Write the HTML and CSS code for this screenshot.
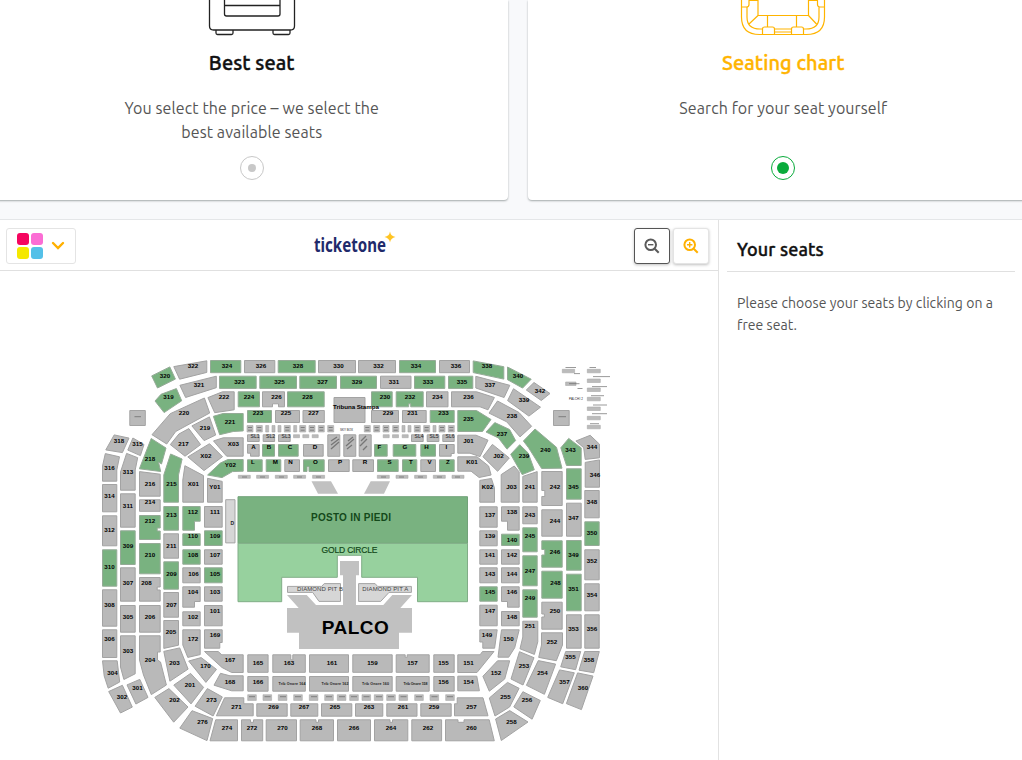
FILE: index.html
```
<!doctype html>
<html lang="en">
<head>
	<meta charset="utf-8">
	<title>Seating chart</title>
	<link rel="stylesheet" href="styles.css">
</head>

<body>
<div class="modes">
	<div class="mode">
		<svg class="mode-icon" width="90" height="36" viewBox="0 0 90 36">
			<path d="M2.500 0v26q0 4 4 4h77q4 0 4-4V0M17.500 0v14q0 2 2 2h51.500q2 0 2-2V0M17.500 5.500h55.500M9 30v3q0 1.500 1.500 1.500h14q1.500 0 1.500-1.500v-3M66 30v3q0 1.500 1.500 1.500h14q1.500 0 1.500-1.500v-3"/>
		</svg>
		<h2>Best seat</h2>
		<p>You select the price – we select the<br>best available seats</p>
		<span class="radio"></span>
	</div>
	<div class="mode active">
		<svg class="mode-icon" width="90" height="36" viewBox="0 0 90 36">
			<path d="M3.500 0v17q0 17.500 18 17.500h47q18 0 18-17.500V0M3.500 7h5q2.500 0 2.500-2.500V0.500h9v15h50.500v-15h9v4q0 2.500 2.500 2.500h5M9 7v10q0 12 13 12h3M81 7v10q0 12-13 12h-3M37 29h17M37 32h17M20 15.500l-9 8.500M70.500 15.500l8 8.500M29.500 15.500V27M58.500 15.500V27"/>
			<path d="M24.500 34.500V29q0-2 2-2h8q2 0 2 2v5.500M53.500 34.500V29q0-2 2-2h8q2 0 2 2v5.500"/>
		</svg>
		<h2>Seating chart</h2>
		<p>Search for your seat yourself</p>
		<span class="radio"></span>
	</div>
</div>

<div class="chooser">
	<div class="plan">
		<div class="toolbar">
			<button class="legend">
				<span class="swatches"><i class="red"></i><i class="pink"></i><i class="yellow"></i><i class="blue"></i></span>
				<svg width="14" height="9" viewBox="0 0 14 9"><path d="M2 2l5 5 5-5"/></svg>
			</button>
			<svg class="logo" width="90" height="32" viewBox="0 0 90 32">
				<text x="4" y="23" textLength="72" lengthAdjust="spacingAndGlyphs">ticketone</text>
				<path d="M80 2.500q.6 4.500 5.500 5.500q-4.900 1-5.500 5.500q-.6-4.500-5.500-5.500q4.900-1 5.500-5.500z"/>
			</svg>
			<div class="zoom">
				<button class="out"><svg width="16" height="16" viewBox="0 0 16 16"><circle cx="6.700" cy="6.700" r="5.300"/><path d="M10.700 10.700l4 4"/><path class="sign" d="M4 6.700h5.400"/></svg></button>
				<button class="in"><svg width="16" height="16" viewBox="0 0 16 16"><circle cx="6.700" cy="6.700" r="5.300"/><path d="M10.700 10.700l4 4"/><path class="sign" d="M4 6.700h5.400M6.700 4v5.400"/></svg></button>
			</div>
		</div>

		<svg class="map" width="718" height="489" viewBox="0 271 718 489">
			<!-- pitch and stage -->
			<path class="posto" d="M238 496.700h229.500v46.600H238z"/>
			<path class="gold" d="M238 543.300h229.500v58.400h-50v-24.400h-55.800v-22h-24.400v22h-55.600v24.400H238z"/>
			<path class="stage" d="M340 561h19v14.300h-3V605h27.300l9-10H412l-11.700 13H412v24.700h-13V649H299v-16.300h-12V608h11.700L287 595h19.700l9.300 10h27v-29.700h-3zM311.500 481.300H331l7 12.400h-20zM370.700 481.300H390l-6 12.400h-20z"/>
			<path class="pit" d="M287.500 586.400h34.200l2.500-2.800h16.300v17.800h-21.500l-6.300-9h-25.200zM358.600 583.600h16.500l2.500 2.800h33.800v6H389l-8.300 9h-22.100zM225.700 499.700h9.300v43.200h-9.300z"/>

			<g class="sold">
				<!-- third ring, north -->
				<path d="M173.800 366.600l33-5.800v11.600l-27.200 6.800zM244.500 360.500h30.300v12.200h-30.300zM318.500 360.500h37v12.200h-37zM358.500 360.500h37v12.200h-37zM439.500 360.500h30v12.200h-30zM534 382.500l16 11-8.700 7-15-10.500z"/>
				<path d="M179.900 385.300l36.400-9.100v11.500l-30.700 9.800zM380.500 376.200h30.500v12.200h-30.500zM475.800 376.300l34 9-5.700 12.200-28.300-9.500zM513.500 388.700l27 18.500-11.600 8.900-21.300-15.500z"/>
				<!-- second ring, north -->
				<path d="M207.900 397.600l14.500-5.800h11.800v18l-19.500 2.900zM262.500 391.800h22v15h-6v-3h-6v3h-10zM334 397.500h31v25h-31zM426.500 391.800h21.500v15h-21.500zM451.500 391.800h25.200l17.700 5.700-6.400 12.300-8-3h-28.500z"/>
				<path d="M204.400 398l5.300 15-34 18.500-9 12.500-14.700-9.300 18.200-21zM191.900 425.900l17.500-9 6.300 18.100-11.600 5.600zM170.300 444.600l8.600-10.600 9.900-5.400 11.800 16-15.600 11.600zM497.500 401l21.500 11.500 12.600 13.800-11.600 10.600-13.300-15.100-17.700-8.700z"/>
				<path d="M275.500 410.500h24v12h-24zM303 410.500h21.300v12H303zM371.500 410.500h27v12h-27zM402.500 410.500h23.700v12h-23.700z"/>
				<!-- corners -->
				<path d="M187.800 456.900l21.700-13.200 13 13-18.500 13.900zM213.500 440.900l9.700-3.100h20v18.400h-16.500l-2-2.200zM184.900 465.700l18.600 9.900v26.600h-20.700V480zM207.500 478.300l14.700 3.100v20.800h-14.700zM457.800 435.200H476l12 5-8 16.400-10-3.400h-12.200zM492.400 444.400l16.900 13.600-11.700 13.300-14.700-14.600zM457.800 456.800H477l11.600 9.200 2.500 9-12 2.500-8-6.300h-13.300zM479.800 480.400l11.600-1.900 3.100 9.500v14.200h-14.700zM501.200 474.600l13-8.600 5 5.900v30.300h-18zM522.800 476.400l14.400-4.800v30.600h-14.400z"/>
				<path d="M114.200 434.900l14.800 3.200-6.600 14.500-16.600-2.700zM132.900 438l11.100 6.500-3.600 11.100-12.600-5.500zM105.300 453.600l14.200 3.200-2.700 13.200v11.200h-14.300V466zM126.600 453.400l11.100 4.300-2.500 12.300v20.200h-14.700V472zM575.900 441l14.300-5.700 9.300 8.900v13.600l-14.300 1.600-1.500-11.700zM585.200 462.400l14.300-2.500v27.300h-14.300z"/>
				<!-- west stand -->
				<path d="M102.500 484.500h14.300v27.300h-14.300zM102.500 515.800h14.300v30h-14.300zM102.500 589.800h14.300v36.400h-14.300zM102.500 629.800h14.300v27.700h-14.300zM102.500 660.800h14.700l2.500 21.200-11.500 6.200-4-12.200zM108.700 691.500l13.700-6.200 9.900 21.800-11.800 5.900z"/>
				<path d="M120.500 493.800h14.700v33.400h-14.700zM120.500 567.800h14.700v33.400h-14.700zM120.500 605.500h14.700v26.700h-14.700zM120.500 635.800h14.700v38l-11.300 5.700-3.400-12.500zM127 684.900l12.800-5.500 8.200 18-12.100 6.600z"/>
				<path d="M139.500 471.600l20.700 2.600v22h-20.700zM139.500 499.800h20.700v11.500h-20.700zM139.500 577.500h20.700v9.500h-3v3h3v11.200h-20.700zM139.500 605.500h20.700v26.700h-20.700zM139.500 635.800h20.700V652h-2.700v8l3 2 5.900 23-15.100 9.600-7.800-19.600-4-15z"/>
				<path d="M163.800 533.800h14.700v24.400h-14.700zM163.800 592.500h14.700v24.700h-14.700zM163.800 620.500h14.700v24.700l-14.700 3.200zM163.800 651.400l15.900-3.500 8.400 21.200-18.200 12.100zM154.800 697.400l14.100-8.800 19.100 18.400-14.300 15.200zM173.800 685.100l16.800-11.700 13 14-12.600 16.500z"/>
				<path d="M182.800 567.800h17.400v15h-17.400zM182.800 586.800h17.400v14.700h-5.700v5.700h-11.700zM182.800 611.800h17.400v14h-17.400zM182.800 629.800h17.400v24.800l-12.400 2.800-5-12.400zM188.700 661l12.500-3.400 15.300 11.800-10.600 13zM207.400 688.600l14.900 8.300-9.200 19.100-18-9.800zM192 710.700l20.700 7.900-5.700 22-27.200-12.500z"/>
				<path d="M204.500 506.500h17.700v20.700h-17.700zM204.500 549.800h17.700v14.400h-17.700zM204.500 586.800h17.700v14.400h-17.700zM204.500 605.500h17.700v20.300h-17.700zM204.500 629.800h17.700v12.700h-2.400v5.700h-15.300zM204.500 651.500h13.700l3.600 3.300h21.400v17.700h-11.500l-9.700-5zM220.500 673.300l9.500 2.500h13.200v15h-11.500l-17.700-5.600zM224.600 697.800h19.200v6h9.400v12h-36.800zM215.700 719.800h21.800v21H210z"/>
				<!-- main stand -->
				<path d="M247.800 654.800h20.300v17.500h-20.300zM272.800 654.800h18v5h2v-5h12.500v17.500h-32.500zM309.500 654.800h39v17.500h-39zM352.800 654.800h39.400v17.500h-39.400zM396.200 654.800h9v2.500h2v-2.500h22v17.500h-33zM433.800 654.800h20.400v17.500h-20.400zM457.800 654.800h22.300l2.400-3.300h11.500l-17 21h-19.200z"/>
				<path d="M247.800 676.500h20.300v14.700h-20.300zM272.800 676.500h32.500v14.700h-32.500zM309.500 676.500h39v14.700h-39zM352.800 676.500h39.400v14.700h-39.400zM396.200 676.500h33v14.700h-33zM433.800 676.500h20.400v14.700h-20.400zM457.800 676.200h19l2.600 14.600h-21.600z"/>
				<path d="M256.800 703.800h30.400v12.400h-30.400zM290.800 703.800h27v12.400h-27zM321.500 703.800h30.300v12.400h-30.300zM355.500 703.800h27.300v12.400h-27.300zM386.800 703.800H417v12.400h-30.200zM420.800 703.800h30.400v12.400h-30.400zM454.500 703.800h2.700v-6H483l5 18h-33.500z"/>
				<path d="M241.500 719.800h9v2.500h3v-2.500h9.200v21h-21.200zM266.200 719.800h30.300v21h-30.300zM300.200 719.800h15.800v2.500h2.500v-2.500h15v21h-33.300zM337.500 719.800h33v21h-33zM374.500 719.800h15.500v2.500h2.500v-2.500h15.300v21h-33.300zM411.800 719.800h29.800v21h-29.800zM445.500 719.800h12.500v2.500h6v-2.500h25.200l5.100 21h-48.800z"/>
				<!-- east stand -->
				<path d="M479.800 506.800h17.400v20.400h-17.400zM479.800 530.800h17.400v15h-17.400zM479.800 549.800h17.400v14.400h-17.400zM479.800 567.800h17.400v15h-17.400zM479.800 605.200h17.400v20.600h-17.400zM479.800 629.800h17.400l-2.600 18.400h-11.800V642h-3z"/>
				<path d="M501.500 506.800h17.700v23.400h-11.700v-9h-6zM501.500 549.800h17.700v14.400h-17.700zM501.500 567.800h17.700v15h-17.700zM501.500 586.800h17.700v20.400h-11.700v-5.700h-6zM501.500 611.500h17.700v14.300h-17.700zM501.500 629.800h17.700l-4.500 18-6 9.400H498zM497.500 660.800h12.200l-5 18.200-15.400 12.200-6.400-14.900z"/>
				<path d="M522.800 506.800h14.400v17h-14.400zM522.800 621.200h15v20.500l-3.400 12.700-14.400-5.600 2.800-11.800zM519.500 651.700l14.500 6-11 27.300-12-6zM507.500 682.400l11.600 5.900-9.500 18.700-14.600 9-5.700-18zM522.900 691.700l17.400 8.800-8.200 18.700-18.300-12.300zM509.700 710.600l18.300 11.400-26.700 18.500-5.700-21.500z"/>
				<path d="M541.800 471.500h20.400v34h-20.400v-9h3v-6h-3zM541.800 509.800h20.400v26.400h-20.400zM541.800 602.200h20.400v27h-20.400V617h2.500v-3h-2.500zM541.500 632.800h21V645l-6.200 15.700-17.600-3.300 2.800-12.400zM538.300 660.600l17.300 3.500-11.200 30.200-18-9z"/>
				<path d="M566.500 503.200h14.700v33h-14.700zM566.500 614.800h14.700v33.400h-14.700zM565.700 651.500h15l-5.100 18.200-14.900-2.900zM559.600 669.900l14.700 2.900-11.600 30.900-15-6.300zM584.800 490.500h14.400v27.300h-14.400zM584.800 549.800h14.400v30h-14.400zM584.800 583.800h14.400v27h-14.400zM584.800 614.800h14.400v33.400h-14.400zM584.700 651.500h14.600l-5.600 21.200-14.700-2.500zM577.600 672.900l15.400 3.200-11.600 33.500-15-6z"/>
				<!-- lettered boxes -->
				<path d="M247.500 444.500h11.700v11.700h-8.700v-3h-3zM303.500 444.500h19.700v11.700h-19.700zM327.800 434.800h12v21.500h-12zM343.800 434.800h12v21.500h-12zM359.200 434.800h12v21.500h-12zM439.500 444.500h14.700v9h-3v2.700h-11.700zM284.800 459.800h14.700v11.700h-14.700zM328.500 459.800h20.700v11.700h-20.700zM352.800 459.800h20.700v11.700h-20.700zM420.800 459.800h14.700v11.700h-14.700z"/>
				<path d="M247.500 434.800h11.700v6.700h-11.700zM263.200 434.800h11.400v6.700h-11.400zM278.500 434.800h11.700v6.700h-11.700zM411.500 434.800h11.700v6.700h-11.700zM427.200 434.800h11.700v6.700h-11.700zM442.800 434.800h11.400v6.700h-11.400zM129.800 410.500h15.500v15h-15.500zM553.500 410.500h15.700v15h-15.700z"/>
			</g>

			<!-- sky boxes and hospitality rows -->
			<g class="mini">
				<path d="M247 425.500h6v6.500h-6zM256.300 425.500h6v6.500h-6zM265.700 425.500h3v6.500h-3zM272 425.500h3v6.500h-3zM278 425.500h3v6.500h-3zM284.300 425.500h6v6.500h-6zM293.700 425.500h3v6.500h-3zM299.700 425.500h6v6.500h-6zM309 425.500h6v6.500h-6zM318.300 425.500h6v6.500h-6zM327.700 425.500h6v6.500h-6zM364.300 425.500h6v6.500h-6zM373.700 425.500h6v6.500h-6zM383 425.500h6v6.500h-6zM392.700 425.500h6v6.500h-6zM402 425.500h3v6.500h-3zM408 425.500h3v6.500h-3zM414.300 425.500h6v6.500h-6zM423.700 425.500h6v6.500h-6zM433 425.500h3v6.500h-3zM439 425.500h6v6.500h-6zM448.300 425.500h6v6.500h-6z"/>
				<path d="M293.500 434.700h6v3h-6zM302.800 434.700h6v3h-6zM312.200 434.700h6v3h-6zM383.200 434.700h6v3h-6zM392.500 434.700h6v3h-6zM402.200 434.700h6v3h-6z"/>
				<path d="M238.300 475.300h12v3h-12zM256.600 475.300h12v3h-12zM275.300 475.300h12v3h-12zM293.600 475.300h12v3h-12zM312.600 475.300h12v3h-12zM377.300 475.300h12v3h-12zM396 475.300h12v3h-12zM414.600 475.300h12v3h-12zM433.300 475.300h12v3h-12zM452 475.300h12v3h-12z"/>
				<path d="M247.700 694.700h8.600v5.700h-8.600zM263 694.700h8.600v5.700H263zM278.300 694.700h8.600v5.700h-8.600zM293.700 694.700h8.600v5.700h-8.600zM309.300 694.700h8.600v5.700h-8.600zM324.700 694.700h8.600v5.700h-8.600zM337.300 694.700h8.600v5.700h-8.600zM349.700 694.700h8.600v5.700h-8.600zM362 694.700h8.600v5.700H362zM374.300 694.700h8.600v5.700h-8.600zM386.700 694.700h8.600v5.700h-8.600zM399 694.700h8.600v5.700H399zM414.700 694.700h8.600v5.700h-8.600zM430 694.700h8.600v5.700H430zM445.700 694.700h8.600v5.700h-8.600z"/>
				<path d="M587.300 369.300h13v3.500h-13zM587.300 379h13v3.500h-13zM587.300 388h13v3.500h-13zM587.300 397.300h13v3.500h-13zM587.300 407h13v3.500h-13zM587.300 416.300h13v3.500h-13zM587.300 425.300h13v3.500h-13zM562.300 369.300h12.300v3.500h-12.300zM565.600 382h10.400v3.500h-10.400z"/>
			</g>
			<g class="ticks">
				<path d="M248 427.500h4M257.300 427.500h4M285.300 427.500h4M300.700 427.500h4M310 427.500h4M319.300 427.500h4M328.700 427.500h4M365.300 427.500h4M374.700 427.500h4M384 427.500h4M393.700 427.500h4M415.300 427.500h4M424.700 427.500h4M440 427.500h4M449.300 427.500h4"/>
				<path d="M248 430.200h4M257.300 430.200h4M285.300 430.200h4M300.700 430.200h4M310 430.200h4M319.300 430.200h4M328.700 430.200h4M365.300 430.200h4M374.700 430.200h4M384 430.200h4M393.700 430.200h4M415.300 430.200h4M424.700 430.200h4M440 430.200h4M449.300 430.200h4"/>
				<path d="M242 477h5M260 477h5M279 477h5M297 477h5M316 477h5M381 477h5M399 477h5M418 477h5M437 477h5M455 477h5M249 696.700h6M264.500 696.700h6M280 696.700h6M295 696.700h6M311 696.700h6M326 696.700h6M339 696.700h6M351 696.700h6M363.500 696.700h6M376 696.700h6M388 696.700h6M400.500 696.700h6M416 696.700h6M431.500 696.700h6M447 696.700h6"/>
				<path d="M134.500 416.700h6.500M558.500 416.700h7.500M565.500 367.500h10.500M574 373.600h6M569 383.700h10.500M577.500 388.500h5M589.500 367.500h6.500M593 376.600h17M592 386.600h15M591 395.700h13M593 405h14M592 413.700h15M590 423.700h9"/>
			</g>

			<g class="free">
				<path d="M151.700 375.900l18.100-9 5.600 12.200-17.900 8.900zM210.500 360.500h30.300v12.200h-30.300zM278.200 360.500h37v12.200h-37zM399.500 360.500h36v12.200h-36zM473.200 360.900l30.600 5.800v12.400l-30.600-6.500zM507.500 367l23.700 12.200-8.600 8.900-15.100-8.400z"/>
				<path d="M155 401l6-6.700 15.400-5.700 5.300 12.200-17.600 11.800zM219.500 376.200h36.700v12.200h-36.700zM259.800 376.200h36.700v12.200h-36.700zM299.800 376.200h36.700v12.200h-36.700zM340.500 376.200h36v12.200h-36zM414.500 376.200h30.300v12.200h-30.300zM448.500 376.200h24.300v12.200h-24.300z"/>
				<path d="M238.200 391.800h21.300v15h-21.300zM287.500 391.800h36.700v15h-36.700zM371.500 391.800h20.700v15h-20.700zM396.200 391.800h27v15h-12.500v-3h-2v3h-12.500zM213.400 416.300l9.700-2.800h20.100v17.400l-10 .6-13.500 3.200zM247.500 410.500h24v12h-24zM430.200 410.500h24v12h-24zM457.800 410.500h18.700l14.500 9-8.500 12h-24.700z"/>
				<path d="M486 432l8.800-9.400 14.800 6.900 6 11.100-8.600 8.600-8.500-11.200zM519.700 444.700l8.500 8.300 6.100 16.700-12.100 4.900-11.500-20.300zM535 429l21.500 18.300 5.500 20.900-20.400.3-13-20.700-5.200-6.800zM568.700 438.400l12.500 9.500v17.600h-14.700l-5.700-17.700zM566.500 468.800h14.700v30.400h-14.700z"/>
				<path d="M151.200 438.500l14.800 9.500-4.500 16-3-2 2.200 9.500-21.300-2.700zM170.600 454l11.500 5-3.600 16v27.200h-14.700V475zM207.600 475l12.700-11.900 7.500-3.600h15.400v11.700l-10.700.4-10.500 6z"/>
				<path d="M262.500 444.500h12v11.700h-12zM278.500 444.500h19.700v11.700h-19.700zM374.500 444.500h12.700v11.700h-12.700zM393.200 444.500h22.600v11.700h-22.600zM420.800 444.500h14.700v11.700h-14.700zM247.500 459.800h14.700v11.700h-14.700zM266.200 459.800h14.600v11.700h-14.600zM303.500 459.800h20.700v11.700H309v-5h-2v5h-3.500zM377.500 459.800h20.700v11.700h-20.700zM402.500 459.800h14.300v11.700h-14.300zM439.500 459.800h14.700v11.700h-14.700z"/>
				<path d="M102.500 549.800h14.300v36.400h-14.300zM120.500 530.800h14.700v33.700h-14.700zM139.500 515.500h20.700V528h-3v3h3v8.500h-20.700zM139.500 543.500h20.700v30.300h-20.700zM163.800 506.500h14.700v23.700h-14.700zM163.800 561.800h14.700v27.400h-14.700zM182.800 506.500h17.400v14.700h-5.700v9h-11.700zM182.800 533.800h17.400v11.700h-17.400zM182.800 549.800h17.400v14.400h-17.400zM204.500 530.800h17.700v14.700h-17.700zM204.500 567.800h17.700v15h-17.700z"/>
				<path d="M479.800 586.800h17.400v14.400h-17.400zM501.500 534.200h17.700v11.300h-17.700zM522.800 527.800h14.400v24h-14.400zM522.800 555.800h14.400v30h-14.400zM522.800 589.800h14.400v27.400h-14.400zM541.800 540.800h20.400v26.400h-20.400V555h3v-5.500h-3zM541.800 571.200h20.400v27h-20.400zM566.500 540.500h14.700v29.700h-14.700zM566.500 574.200h14.700v36.600h-14.700zM584.800 521.800h14.400v23.700h-14.400z"/>
			</g>

			<g class="hatch">
				<path d="M331 441l6-4M331 445l8-6M331 449l8-7M348 441l5-4M346 446l8-7M347 449l5-4M361 441l5-5M360 446l7-7M363 450l4-4"/>
			</g>

			<g class="labels">
				<text x="193" y="368">322</text><text x="227" y="368">324</text><text x="261" y="368">326</text><text x="298" y="368">328</text><text x="338.500" y="368">330</text><text x="378.500" y="368">332</text><text x="416" y="368">334</text><text x="456" y="368">336</text><text x="487" y="368">338</text><text x="165" y="378">320</text><text x="518" y="378">340</text><text x="540" y="393">342</text>
				<text x="168.500" y="399">319</text><text x="199" y="387">321</text><text x="239.500" y="384">323</text><text x="279.500" y="384">325</text><text x="322.500" y="384">327</text><text x="357" y="384">329</text><text x="394" y="384">331</text><text x="428" y="384">333</text><text x="462" y="384">335</text><text x="490" y="387">337</text><text x="524" y="402">339</text>
				<text x="224" y="399">222</text><text x="249" y="399">224</text><text x="276.500" y="399">226</text><text x="307.500" y="399">228</text><text x="385" y="399">230</text><text x="410" y="399">232</text><text x="437.500" y="399">234</text><text x="468.500" y="399">236</text><text x="512" y="418">238</text><text x="356" y="409.300" textLength="46">Tribuna Stampa</text>
				<text x="184" y="415">220</text><text x="230" y="424">221</text><text x="205" y="430">219</text><text x="183.500" y="446">217</text><text x="258" y="415">223</text><text x="286" y="415">225</text><text x="313.500" y="415">227</text><text x="388" y="415">229</text><text x="412.500" y="415">231</text><text x="443.500" y="415">233</text><text x="468.500" y="421">235</text><text x="502" y="436">237</text><text x="524" y="458">239</text><text x="545.500" y="452">240</text><text x="570.500" y="452">343</text><text x="592" y="449">344</text><text x="595" y="477">346</text>
				<text x="233.500" y="446">X03</text><text x="206" y="458">X02</text><text x="193.500" y="486">X01</text><text x="230.500" y="467">Y02</text><text x="215" y="489">Y01</text><text x="468.500" y="443">J01</text><text x="498.500" y="458">J02</text><text x="511.500" y="489">J03</text><text x="472" y="464">K01</text><text x="487.500" y="489">K02</text>
				<text x="253.500" y="449">A</text><text x="269" y="449">B</text><text x="290" y="449">C</text><text x="315" y="449">D</text><text x="379.500" y="449">F</text><text x="405" y="449">G</text><text x="426.500" y="449">H</text><text x="446.500" y="449">I</text>
				<text x="253" y="464">L</text><text x="275.500" y="464">M</text><text x="290.500" y="464">N</text><text x="315.500" y="464">O</text><text x="340" y="464">P</text><text x="365" y="464">R</text><text x="389.500" y="464">S</text><text x="411" y="464">T</text><text x="429.500" y="464">V</text><text x="448" y="464">Z</text>
				<text x="119" y="443">318</text><text x="137.500" y="446">315</text><text x="150" y="461">218</text><text x="109.500" y="470">316</text><text x="128" y="474">313</text><text x="150" y="486">216</text><text x="171.500" y="486">215</text>
				<text x="109.500" y="498">314</text><text x="109.500" y="532">312</text><text x="109.500" y="569">310</text><text x="109.500" y="607">308</text><text x="109.500" y="641">306</text><text x="112.500" y="675">304</text><text x="122" y="699">302</text>
				<text x="128" y="508">311</text><text x="128" y="548">309</text><text x="128" y="585">307</text><text x="128" y="619">305</text><text x="128" y="653">303</text><text x="137.500" y="690">301</text>
				<text x="150" y="504">214</text><text x="150" y="523">212</text><text x="150" y="557">210</text><text x="146.500" y="585">208</text><text x="150" y="619">206</text><text x="150" y="662">204</text>
				<text x="171.500" y="517">213</text><text x="171.500" y="548">211</text><text x="171.500" y="576">209</text><text x="171.500" y="607">207</text><text x="171" y="634">205</text><text x="174.500" y="665">203</text><text x="174.500" y="702">202</text><text x="190" y="687">201</text>
				<text x="193" y="514">112</text><text x="193" y="538">110</text><text x="193" y="557">108</text><text x="193.500" y="576">106</text><text x="193" y="594">104</text><text x="193" y="619">102</text><text x="193" y="641">172</text><text x="205.500" y="668">170</text><text x="211.500" y="702">273</text><text x="202.500" y="724">276</text>
				<text x="215" y="514">111</text><text x="215" y="538">109</text><text x="215" y="557">107</text><text x="215" y="576">105</text><text x="215" y="594">103</text><text x="215" y="613">101</text><text x="215" y="637">169</text><text x="230" y="662">167</text><text x="230" y="684">168</text><text x="236.500" y="709">271</text><text x="227" y="730">274</text>
				<text x="258" y="665">165</text><text x="289" y="665">163</text><text x="332" y="665">161</text><text x="372.500" y="665">159</text><text x="412.500" y="665">157</text><text x="443.500" y="665">155</text><text x="468.500" y="665">151</text><text x="258" y="684">166</text><text x="443.500" y="684">156</text><text x="468.500" y="684">154</text>
				<text x="273.500" y="709">269</text><text x="304" y="709">267</text><text x="335" y="709">265</text><text x="369" y="709">263</text><text x="403" y="709">261</text><text x="434" y="709">259</text><text x="471.500" y="709">257</text>
				<text x="252" y="730">272</text><text x="282.500" y="730">270</text><text x="317" y="730">268</text><text x="354" y="730">266</text><text x="391" y="730">264</text><text x="428" y="730">262</text><text x="471.500" y="730">260</text>
				<text x="490" y="517">137</text><text x="490" y="538">139</text><text x="490" y="557">141</text><text x="490" y="576">143</text><text x="490" y="594">145</text><text x="490" y="613">147</text><text x="487" y="637">149</text><text x="512" y="514">138</text><text x="512" y="542">140</text><text x="512" y="557">142</text><text x="512" y="576">144</text><text x="512" y="594">146</text><text x="512" y="619">148</text><text x="508.500" y="641">150</text><text x="496" y="675">152</text>
				<text x="530" y="489">241</text><text x="530" y="517">243</text><text x="530" y="538">245</text><text x="530" y="573">247</text><text x="530" y="600">249</text><text x="530" y="628">251</text><text x="524" y="668">253</text><text x="505.500" y="699">255</text><text x="527" y="702">256</text><text x="511.500" y="724">258</text>
				<text x="555" y="489">242</text><text x="555" y="523">244</text><text x="555" y="554">246</text><text x="555.500" y="585">248</text><text x="555" y="613">250</text><text x="552" y="644">252</text><text x="542.500" y="675">254</text>
				<text x="573.500" y="489">345</text><text x="573.500" y="520">347</text><text x="573.500" y="557">349</text><text x="573.500" y="591">351</text><text x="573.500" y="631">353</text><text x="570.500" y="659">355</text><text x="564.500" y="684">357</text>
				<text x="592" y="504">348</text><text x="592" y="535">350</text><text x="592" y="563">352</text><text x="592" y="597">354</text><text x="592" y="631">356</text><text x="589" y="662">358</text><text x="583" y="690">360</text>
			</g>
			<g class="notes">
				<text x="255" y="438.300">SL1</text><text x="270.500" y="438.300">SL2</text><text x="286" y="438.300">SL3</text><text x="419" y="438.300">SL4</text><text x="434" y="438.300">SL5</text><text x="450" y="438.300">SL6</text>
				<text class="gate" x="232.300" y="525">D</text>
				<text class="pit-name" x="320" y="591.200" textLength="46">DIAMOND PIT B</text>
				<text class="pit-name" x="385.300" y="591.200" textLength="46">DIAMOND PIT A</text>
			</g>
			<g class="tiny">
				<text x="292" y="685" textLength="27">Trib Onore 164</text><text x="335" y="685" textLength="27">Trib Onore 162</text><text x="375.500" y="685" textLength="27">Trib Onore 160</text><text x="415.500" y="685" textLength="24">Trib Onore 158</text>
				<text class="sky" x="346.500" y="431" textLength="13">SKY BOX</text><text class="sky" x="576" y="400.300" textLength="14">PALCHI 2</text>
			</g>
			<text class="posto-name" x="351" y="521" textLength="80">POSTO IN PIEDI</text>
			<text class="gold-name" x="349.500" y="553.200" textLength="56">GOLD CIRCLE</text>
			<text class="stage-name" x="355.300" y="634" textLength="67">PALCO</text>
		</svg>
	</div>

	<div class="cart">
		<h3>Your seats</h3>
		<p>Please choose your seats by clicking on a free seat.</p>
	</div>
</div>
</body>
</html>
```
FILE: styles.css
```
body {margin: 0; overflow: hidden; background: #f8f9fb; color: #555; font-family: Ubuntu, "Noto Sans", "Open Sans", sans-serif;}
h2, h3, p {margin: 0;}

/* seat selection modes */
.modes {display: flex; gap: 20px; width: 1043px; height: 200px; margin: 0 0 19px -4px;}
.mode {display: flex; flex-direction: column; align-items: center; width: 511.500px; box-sizing: border-box; background: #fff; border-radius: 0 0 4px 4px; box-shadow: 0 1px 2px rgba(60, 70, 70, .45); text-align: center;}
.mode-icon {display: block; fill: none; stroke: #222; stroke-width: 1.300;}
.mode h2 {margin-top: 12px; color: #111; font-size: 20px; font-weight: 500; line-height: 30px; letter-spacing: .08px; -webkit-text-stroke: .4px;}
.mode p {height: 48px; margin-top: 18px; font-size: 16px; line-height: 24px; letter-spacing: .1px;}
.radio {display: flex; align-items: center; justify-content: center; width: 22px; height: 22px; margin-top: 12px; border: 1px solid #c8c8c8; border-radius: 50%;}
.radio::after {content: ""; width: 8px; height: 8px; border-radius: 50%; background: #c8c8c8;}
.active .mode-icon {stroke: #ffb400; stroke-width: 1.200;}
.active h2 {color: #ffb400;}
.active .radio {border-color: #09ab3b;}
.active .radio::after {width: 12px; height: 12px; background: #09ab3b;}

/* chart and cart */
.chooser {display: flex; height: 541px; border-top: 1px solid #e4e6e8; background: #fff;}
.plan {width: 718px; border-right: 1px solid #e2e2e2;}
.toolbar {display: flex; align-items: center; justify-content: space-between; height: 50px; padding: 0 9px 0 6px; box-sizing: content-box; border-bottom: 1px solid #e0e0e0; width: 703px;}
.toolbar button {display: flex; align-items: center; justify-content: center; box-sizing: border-box; height: 36px; margin: 1px 0 0; padding: 0; background: #fff; border: 1px solid #e4e4e4; border-radius: 3px;}
.toolbar .legend {width: 70px; gap: 8px;}
.swatches {display: grid; grid-template-columns: 12px 12px; gap: 2px;}
.swatches i {height: 12px; border-radius: 3px;}
.red {background: #f5055f;}
.pink {background: #fb6dd4;}
.yellow {background: #f5e800;}
.blue {background: #54c0e8;}
.legend svg {fill: none; stroke: #ffb000; stroke-width: 2.400; stroke-linecap: round;}
.logo {overflow: visible;}
.logo text {font-family: "Noto Sans", sans-serif; font-size: 19px; font-weight: 700; fill: #1f2a6b;}
.logo path {fill: #ffc423;}
.zoom {display: flex; gap: 3px;}
.zoom button {width: 36px; box-shadow: 0 1px 3px rgba(0, 0, 0, .25);}
.zoom svg {fill: none; stroke: #5a5a5a; stroke-width: 2;}
.zoom .sign {stroke-width: 1.400;}
.zoom .out {border-color: #555;}
.zoom .in svg {stroke: #ffb000;}
.cart {width: 288px; padding: 0 7px 0 8px;}
.cart h3 {height: 51px; padding-left: 10px; border-bottom: 1px solid #e0e0e0; color: #111; font-size: 18px; font-weight: 500; line-height: 59px; letter-spacing: .15px; -webkit-text-stroke: .4px;}
.cart p {padding: 20px 10px 0; font-size: 14px; line-height: 22px; letter-spacing: .06px;}

/* seating map */
.map {display: block; font-family: "Liberation Sans", Arial, sans-serif; text-anchor: middle;}
.sold {fill: #b9b9b9; stroke: #a3a3a3;}
.free {fill: #79b280; stroke: #95aa97;}
.mini {fill: #bbb; stroke: #aaa; stroke-width: .6;}
.ticks {fill: none; stroke: #555; stroke-width: .6;}
.hatch {stroke: #777; stroke-width: 1.300;}
.posto {fill: #79b280; stroke: #72a279;}
.gold {fill: #97d19e; stroke: #81ad87;}
.stage {fill: #c1c1c1;}
.pit {fill: #d6d6d6; stroke: #a5a5a5;}
.labels {font-size: 6.200px; font-weight: 700; fill: #000; letter-spacing: .1px;}
.notes {font-size: 5px; fill: #222;}
.gate {font-weight: 700;}
.pit-name {font-size: 6px; fill: #444;}
.tiny {font-size: 3.600px; font-weight: 700; fill: #222;}
.sky {font-size: 3px; font-weight: 400;}
.posto-name {font-size: 10px; font-weight: 700; fill: #14491a;}
.gold-name {font-size: 8.500px; fill: #14491a; stroke: #14491a; stroke-width: .2;}
.stage-name {font-size: 19px; font-weight: 700;}
```
